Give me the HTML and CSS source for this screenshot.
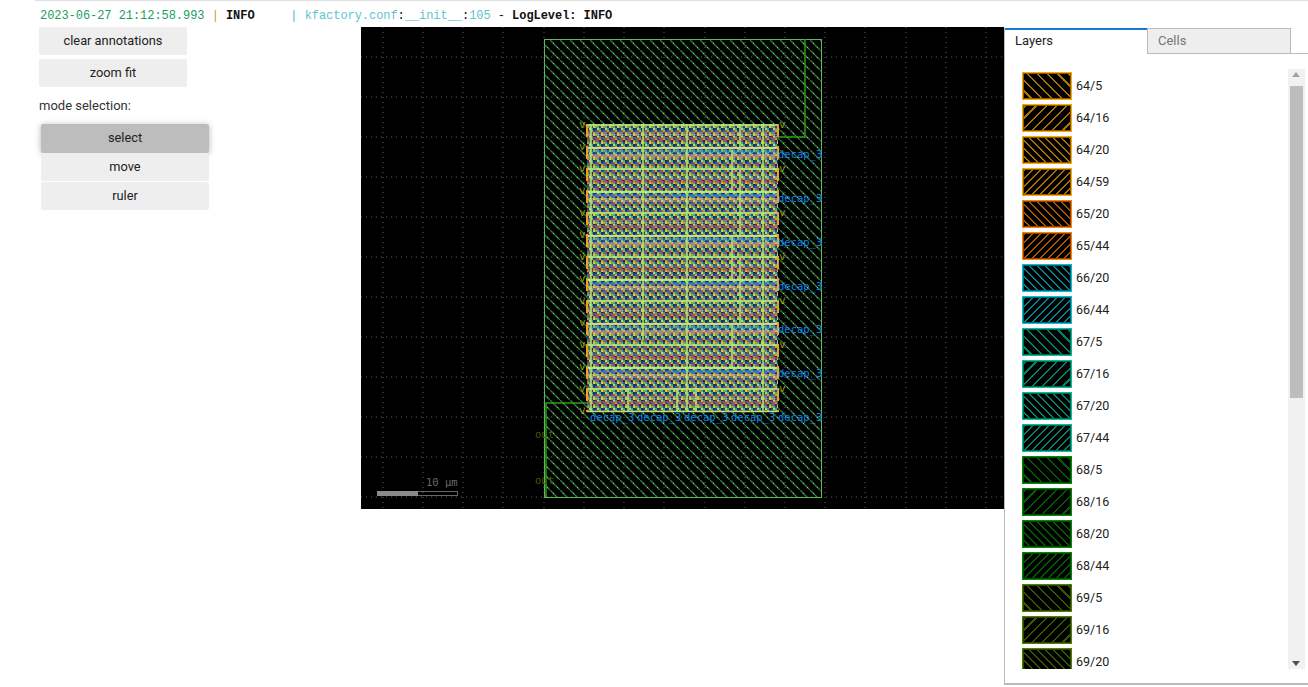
FILE: index.html
```html
<!DOCTYPE html>
<html lang="en">
<head>
  <meta charset="UTF-8" />
  <title>kfactory layout view</title>
  <link rel="stylesheet" href="styles.css">
</head>
<body>

  <!-- Log output -->
  <div class="log"><span class="log-time">2023-06-27 21:12:58.993</span> <span class="pipe-a">|</span> <b>INFO    </b> <span class="pipe-b">|</span> <span class="log-name">kfactory.conf</span>:<span class="log-name">__init__</span>:<span class="log-name">105</span> - <b>LogLevel: INFO</b></div>

  <div class="viewer">

    <!-- Controls -->
    <div class="controls">
      <button class="btn">clear annotations</button>
      <button class="btn">zoom fit</button>
      <p class="mode-label">mode selection:</p>
      <div class="modes">
        <button class="btn mode active">select</button>
        <button class="btn mode">move</button>
        <button class="btn mode">ruler</button>
      </div>
    </div>

    <!-- Layout canvas, coordinates are the page pixels of the picture -->
    <svg class="canvas" width="643" height="482" viewBox="361 27 643 482">
      <defs>
        <pattern id="hatch" patternUnits="userSpaceOnUse" width="10" height="10">
          <path d="M-1 -1L11 11" stroke="#2c7430" stroke-width="1.5"/>
          <path d="M-1 -1L11 11" stroke="#86dc86" stroke-width="1" stroke-dasharray="1.4 4.2"/>
        </pattern>
        <pattern id="checker" patternUnits="userSpaceOnUse" x="587" y="124" width="8" height="8">
          <rect width="8" height="8" fill="#25a04a"/>
          <rect x="2" width="2" height="2" fill="#8a35c8"/>
          <rect x="4" width="2" height="2" fill="#0f3a26"/>
          <rect x="6" width="2" height="2" fill="#e09a30"/>
          <rect y="2" width="2" height="2" fill="#c88a38"/>
          <rect x="2" y="2" width="2" height="2" fill="#30c060"/>
          <rect x="4" y="2" width="2" height="2" fill="#5a25a8"/>
          <rect x="6" y="2" width="2" height="2" fill="#a8e048"/>
          <rect y="4" width="2" height="2" fill="#4a2098"/>
          <rect x="2" y="4" width="2" height="2" fill="#b0e050"/>
          <rect x="4" y="4" width="2" height="2" fill="#20a8a8"/>
          <rect x="6" y="4" width="2" height="2" fill="#0f3a26"/>
          <rect y="6" width="2" height="2" fill="#18785a"/>
          <rect x="2" y="6" width="2" height="2" fill="#d83868"/>
          <rect x="4" y="6" width="2" height="2" fill="#88c840"/>
          <rect x="6" y="6" width="2" height="2" fill="#3030c0"/>
        </pattern>
        <pattern id="rows" patternUnits="userSpaceOnUse" x="587" y="124" width="191" height="44">
          <rect y="8" width="191" height="3" fill="#f0d090" opacity=".2"/>
          <rect y="13" width="191" height="2" fill="#f04030" opacity=".5"/>
          <rect y="26" width="40" height="3" fill="#1c8cf0" opacity=".4"/>
          <rect x="40" y="26" width="45" height="3" fill="#1c8cf0" opacity=".25"/>
          <rect x="85" y="26" width="106" height="3" fill="#1c8cf0" opacity=".5"/>
          <rect y="30" width="191" height="4" fill="#f2b880" opacity=".45"/>
          <rect y="0" width="191" height="2" fill="#b4ec74" opacity=".85"/>
          <rect y="23" width="191" height="2" fill="#c4f084" opacity=".9"/>
        </pattern>
        <clipPath id="chip-clip"><rect x="544" y="39" width="278" height="458"/></clipPath>
      </defs>

      <rect x="361" y="27" width="643" height="482" fill="#000"/>
      <path class="grid" d="M383 27V509M423 27V509M463 27V509M503 27V509M544 27V509M584 27V509M624 27V509M664 27V509M705 27V509M745 27V509M785 27V509M825 27V509M865 27V509M906 27V509M946 27V509M986 27V509M361 57H1004M361 97H1004M361 137H1004M361 177H1004M361 217H1004M361 257H1004M361 297H1004M361 337H1004M361 377H1004M361 417H1004M361 457H1004M361 497H1004"/>

      <rect x="544.5" y="39.5" width="277" height="458" fill="url(#hatch)" stroke="#5db85d"/>
      <path class="trace" d="M805 39V137H778M587 403H546V497"/>

      <rect x="587" y="124" width="191" height="288" fill="url(#checker)"/>
      <rect x="587" y="124" width="191" height="288" fill="url(#rows)"/>
      <path class="cell-lines" d="M591 124V412M643 124V340M687 124V412M740 124V150M732 150V192M740 170V236M732 236V280M740 258V324M732 324V368M763 124V412M628 388V412M677 388V412M696 388V412M587 411.5H778"/>
      <path class="pins" d="M587 124V412M778 124V412"/>

      <text class="via" x="579 579 579 579 579 579 579 579 579 579 579 579 579 579" y="128 150 172 194 216 238 260 282 304 326 348 370 392 414">vvvvvvvvvvvvvv</text>
      <text class="via" x="779" y="128">v</text>
      <text class="via" x="779" y="172">v</text>
      <text class="via" x="779" y="216">v</text>
      <text class="via" x="779" y="260">v</text>
      <text class="via" x="779" y="304">v</text>
      <text class="via" x="779" y="348">v</text>
      <text class="via" x="779" y="392">v</text>

      <g class="labels" clip-path="url(#chip-clip)">
        <text x="778" y="158">decap_3</text>
        <text x="778" y="202">decap_3</text>
        <text x="778" y="246">decap_3</text>
        <text x="778" y="290">decap_3</text>
        <text x="778" y="333">decap_3</text>
        <text x="778" y="377">decap_3</text>
        <text x="778" y="421">decap_3</text>
        <text x="590" y="421">decap_3</text>
        <text x="637" y="421">decap_3</text>
        <text x="684" y="421">decap_3</text>
        <text x="731" y="421">decap_3</text>
      </g>

      <text class="port" x="535" y="438">out</text>
      <text class="port" x="535" y="484">out</text>

      <text class="scale-text" x="426" y="486">10 µm</text>
      <rect class="scale-box" x="377.5" y="491.5" width="80" height="4"/>
      <rect class="scale-fill" x="377" y="491" width="41" height="5"/>
    </svg>

    <!-- Layers panel -->
    <div class="panel">
      <div class="tabs">
        <div class="tab selected">Layers</div>
        <div class="tab">Cells</div>
      </div>
      <div class="panel-body">
        <div class="layer-list">
          <div class="layer"><span class="swatch c64 back-wide"></span>64/5</div>
          <div class="layer"><span class="swatch c64 fwd-wide"></span>64/16</div>
          <div class="layer"><span class="swatch c64 back-tight"></span>64/20</div>
          <div class="layer"><span class="swatch c64 fwd-tight"></span>64/59</div>
          <div class="layer"><span class="swatch c65 back-tight"></span>65/20</div>
          <div class="layer"><span class="swatch c65 fwd-tight"></span>65/44</div>
          <div class="layer"><span class="swatch c66 back-tight"></span>66/20</div>
          <div class="layer"><span class="swatch c66 fwd-tight"></span>66/44</div>
          <div class="layer"><span class="swatch c67 back-wide"></span>67/5</div>
          <div class="layer"><span class="swatch c67 fwd-wide"></span>67/16</div>
          <div class="layer"><span class="swatch c67 back-tight"></span>67/20</div>
          <div class="layer"><span class="swatch c67 fwd-tight"></span>67/44</div>
          <div class="layer"><span class="swatch c68 back-wide"></span>68/5</div>
          <div class="layer"><span class="swatch c68 fwd-wide"></span>68/16</div>
          <div class="layer"><span class="swatch c68 back-tight"></span>68/20</div>
          <div class="layer"><span class="swatch c68 fwd-tight"></span>68/44</div>
          <div class="layer"><span class="swatch c69 back-wide"></span>69/5</div>
          <div class="layer"><span class="swatch c69 fwd-wide"></span>69/16</div>
          <div class="layer"><span class="swatch c69 back-tight"></span>69/20</div>
        </div>
        <div class="scrollbar">
          <span class="arrow up"></span>
          <div class="thumb"></div>
          <span class="arrow down"></span>
        </div>
      </div>
    </div>

  </div>
</body>
</html>
```

FILE: styles.css
```css
html, body { margin: 0; background: #fff; }
body {
  width: 1308px; height: 687px; overflow: hidden;
  font-family: Roboto, Arial, sans-serif; font-size: 13px; color: #222;
}

/* Log line */
.log {
  margin-left: 35px; padding-left: 5px;
  height: 26px; line-height: 30px;
  border-top: 1px solid #e0e0e0;
  font-family: "Liberation Mono", monospace;
  font-size: 12px; letter-spacing: -.05px;
  white-space: pre; color: #111;
}
.log-time { color: #1b9e5f; }
.log-name { color: #5fc4cf; }
.pipe-a { color: #c8963c; }
.pipe-b { color: #6aa9cf; }

/* Main row */
.viewer { display: flex; align-items: flex-start; }

/* Controls */
.controls { width: 361px; box-sizing: border-box; padding-left: 39px; }
.btn {
  display: block; width: 148px; height: 28px; padding: 0 0 2px;
  margin-bottom: 4px;
  border: 0; border-radius: 2px;
  background: #eee; color: #222;
  font: 12.8px Roboto, Arial, sans-serif;
}
.mode-label { margin: 11px 0 11px; height: 15px; line-height: 15px; color: #333; }
.modes { margin-left: 2px; }
.mode { width: 168px; margin-bottom: 1px; }
.mode.active {
  height: 29px; padding-bottom: 3px; margin-bottom: 0;
  background: #bdbdbd;
  box-shadow: 0 1px 6px rgba(0,0,0,.3);
}

/* Canvas */
.canvas { display: block; flex: none; }
.grid { fill: none; stroke: #5c5c5c; stroke-dasharray: 1 4; }
.trace { fill: none; stroke: #2f9a1a; stroke-width: 1.5; }
.cell-lines { fill: none; stroke: #b0e870; stroke-width: 1.5; }
.pins { fill: none; stroke: #f0a020; stroke-width: 2; stroke-dasharray: 13 9; }
.via { fill: #8a9a10; font: 11px "DejaVu Sans Mono", monospace; }
.labels { fill: #0a84f0; font: 10.5px "DejaVu Sans Mono", monospace; }
.port { fill: #3f5f00; font: 10.5px "DejaVu Sans Mono", monospace; }
.scale-text { fill: #6a6a6a; font: 10.5px "DejaVu Sans Mono", monospace; }
.scale-box { fill: none; stroke: #666; }
.scale-fill { fill: #8a8a8a; }

/* Layers panel */
.panel {
  flex: none; width: 304px; height: 657px; margin-top: 1px;
  box-sizing: border-box;
  border-left: 1px solid #bbb; border-bottom: 2px solid #bbb;
}
.tabs { display: flex; height: 26px; box-sizing: border-box; border-bottom: 1px solid #bbb; }
.tab {
  box-sizing: border-box; width: 144px; height: 26px;
  padding: 3px 10px 0;
  line-height: 17px; color: #777;
  background: #eee; border: 1px solid #bbb;
}
.tab.selected {
  width: 142px; background: #fff; color: #222;
  border: 0; border-top: 2px solid #1976d2; padding: 2px 9px 0 10px;
}
.panel-body { display: flex; height: 600px; margin-top: 15px; }
.layer-list { flex: none; width: 283px; padding: 3px 0 0 17px; box-sizing: border-box; overflow: hidden; font-size: 12.5px; }
.layer { display: flex; height: 28px; line-height: 28px; margin-bottom: 4px; }

.swatch {
  flex: none; width: 50px; height: 28px; margin-right: 4px;
  box-sizing: border-box; border: 1px solid var(--c);
  box-shadow: inset 0 0 0 1px color-mix(in srgb, var(--c) 55%, #000);
  --h: color-mix(in srgb, var(--c) 68%, #000);
}
.back-wide { background: repeating-linear-gradient(45deg, #000 0 5.6px, var(--h) 5.6px 7.2px); }
.back-tight { background: repeating-linear-gradient(45deg, #000 0 4.357px, var(--h) 4.357px 5.657px); }
.fwd-wide { background: repeating-linear-gradient(-45deg, #000 0 5.6px, var(--h) 5.6px 7.2px); }
.fwd-tight { background: repeating-linear-gradient(-45deg, #000 0 4.357px, var(--h) 4.357px 5.657px); }
.c64 { --c: #ffa800; }
.c65 { --c: #ff7f00; }
.c66 { --c: #00c0d8; }
.c67 { --c: #00c09a; }
.c68 { --c: #008a00; }
.c69 { --c: #508000; }

/* Scrollbar of the list */
.scrollbar {
  flex: none; width: 17px; height: 600px; position: relative;
  background: #f1f1f1;
}
.thumb { width: 13px; height: 312px; margin: 17px 0 0 2px; background: #bdbdbd; }
.arrow { position: absolute; left: 4px; width: 0; height: 0; border: 4px solid transparent; }
.arrow.up { top: 3px; border-top: 0; border-bottom: 5px solid #a3a3a3; }
.arrow.down { bottom: 3px; border-bottom: 0; border-top: 5px solid #505050; }
```
